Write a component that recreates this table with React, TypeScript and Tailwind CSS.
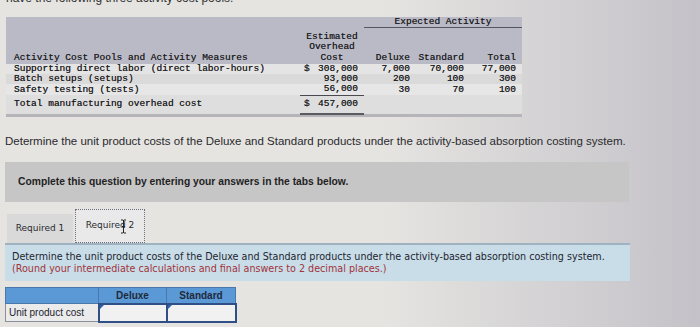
const mono = "font-['Liberation_Mono','Courier_New',monospace]";

const costRows = [
  { label: "Supporting direct labor (direct labor-hours)", cost: "$ 308,000", d: "7,000", s: "70,000", t: "77,000", bg: "bg-[#e4e4e4]" },
  { label: "Batch setups (setups)", cost: "93,000", d: "200", s: "100", t: "300", bg: "bg-[#dadadb]" },
  { label: "Safety testing (tests)", cost: "56,000", d: "30", s: "70", t: "100", bg: "bg-[#e6e6e6]" },
];

function ActivityTable() {
  return (
    <table
      className={`ml-[6px] mt-[11px] w-[516px] table-fixed border-collapse text-[9.5px] leading-[10px] text-[#1f1f24] [text-shadow:0_0_0.5px_#444] ${mono}`}
    >
      <colgroup>
        <col className="w-[294px]" />
        <col className="w-[64px]" />
        <col className="w-[48px]" />
        <col className="w-[56px]" />
        <col className="w-[54px]" />
      </colgroup>
      <tbody>
        <tr className="bg-[#b9bac6]">
          <td className="h-[10px]" />
          <td />
          <td colSpan={3} className="h-[10px] pt-[1px] text-center leading-[8px] border-b border-[#55565e]">
            Expected Activity
          </td>
        </tr>
        <tr className="bg-[#b9bac6]">
          <td className="pl-[8px] pb-[1px] align-bottom">Activity Cost Pools and Activity Measures</td>
          <td className="pt-[5px] pb-[1px] text-center leading-[10.3px] align-bottom">
            Estimated
            <br />
            Overhead
            <br />
            Cost
          </td>
          <td className="pb-[1px] pr-[2px] text-right align-bottom">Deluxe</td>
          <td className="pb-[1px] pr-[4px] text-right align-bottom">Standard</td>
          <td className="pb-[1px] pr-[6px] text-right align-bottom">Total</td>
        </tr>
        {costRows.map((r, i) => (
          <tr key={r.label} className={r.bg}>
            <td className="pl-[8px] h-[10px]">{r.label}</td>
            <td className={`pr-[6px] text-right ${i === 2 ? "border-b border-[#4a4a50] pb-[1px]" : ""}`}>
              {i === 0 ? (
                <span className="flex justify-between pl-[4px]">
                  <span>$</span>
                  <span>308,000</span>
                </span>
              ) : (
                r.cost
              )}
            </td>
            <td className="pr-[2px] text-right">{r.d}</td>
            <td className="pr-[4px] text-right">{r.s}</td>
            <td className="pr-[6px] text-right">{r.t}</td>
          </tr>
        ))}
        <tr className="bg-[#dedede]">
          <td className="pl-[8px] pt-[3px] pb-[4px]">Total manufacturing overhead cost</td>
          <td className="pt-[3px] pb-[4px] pl-[4px] pr-[6px] border-b-2 border-[#5a5a60]">
            <span className="flex justify-between">
              <span>$</span>
              <span>457,000</span>
            </span>
          </td>
          <td />
          <td />
          <td />
        </tr>
        <tr className="bg-[#b4b4b9]">
          <td colSpan={5} className="h-[3px]" />
        </tr>
      </tbody>
    </table>
  );
}

function IBeam() {
  return (
    <svg className="absolute left-[44px] top-[9px]" width="7" height="15" viewBox="0 0 7 15">
      <path d="M1 1h2M4 1h2M3.5 1v13M1 14h2M4 14h2M2 7.5h3" stroke="#222" strokeWidth="1" fill="none" />
    </svg>
  );
}

function AnswerTable() {
  return (
    <table className="ml-[5px] mt-[6px] w-[230px] table-fixed border-collapse font-['Liberation_Sans',Arial,sans-serif] text-[10px] text-[#1d2430]">
      <colgroup>
        <col className="w-[93px]" />
        <col className="w-[68px]" />
        <col className="w-[69px]" />
      </colgroup>
      <tbody>
        <tr className="bg-[#5b98d6]">
          <td className="h-[16px] border border-[#4a78ad]" />
          <td className="border border-[#4a78ad] text-center font-bold text-[#1f2a3a]">Deluxe</td>
          <td className="border border-[#4a78ad] text-center font-bold text-[#1f2a3a]">Standard</td>
        </tr>
        <tr className="bg-[#ebebeb]">
          <td className="h-[18px] border border-[#8a8f99] pl-[3px]">Unit product cost</td>
          <td className="border-2 border-[#2f4f86] bg-[#f1f1f1] p-0 align-top">
            <div className="h-0 w-0 border-l-[4px] border-b-[4px] border-l-[#2f5fa8] border-b-transparent" />
          </td>
          <td className="border-2 border-[#2f4f86] bg-[#f1f1f1] p-0 align-top">
            <div className="h-0 w-0 border-l-[4px] border-b-[4px] border-l-[#2f5fa8] border-b-transparent" />
          </td>
        </tr>
      </tbody>
    </table>
  );
}

export default function App() {
  return (
    <div className="h-[327px] w-[700px] overflow-hidden bg-linear-to-r from-[#e5e4e1] from-55% to-[#c4c2c8]">
      <div className="h-[6px] overflow-hidden">
        <p className="-mt-[9px] pl-[6px] font-['Liberation_Sans',Arial,sans-serif] text-[12px] leading-[14px] text-[#333]">
          have the following three activity cost pools:
        </p>
      </div>
      <ActivityTable />

      <p className="mt-[17px] pl-[5px] font-['Liberation_Sans',Arial,sans-serif] text-[11.5px] leading-[14px] text-[#2a2a2e]">
        Determine the unit product costs of the Deluxe and Standard products under the activity-based absorption costing system.
      </p>

      <div className="ml-[5px] mt-[14px] flex h-[40px] w-[624px] items-center bg-[#c7c6c6] pl-[13px]">
        <span className="font-['Liberation_Sans',Arial,sans-serif] text-[10.3px] font-bold text-[#1f1f24]">
          Complete this question by entering your answers in the tabs below.
        </span>
      </div>

      <div className="ml-[7px] mt-[7px] flex items-end font-['DejaVu_Sans',Verdana,sans-serif] text-[9px] text-[#2a2a30]">
        <div className="flex h-[29px] w-[66px] items-center justify-center bg-[#d9d9d9]">Required 1</div>
        <div className="relative ml-[2px] flex h-[34px] w-[70px] items-center justify-center border border-dotted border-[#6b7080] bg-[#e9e9e9]">
          Required 2
          <IBeam />
        </div>
      </div>

      <div className="ml-[5px] w-[625px] border-t-2 border-[#9fb2c0] bg-[#c8dde8] pl-[7px] pt-[6px] pb-[5px] font-['DejaVu_Sans',Verdana,sans-serif] text-[9.6px] leading-[12.5px]">
        <p className="text-[#1f2530]">
          Determine the unit product costs of the Deluxe and Standard products under the activity-based absorption costing system.
        </p>
        <p className="text-[#a2333a]">(Round your intermediate calculations and final answers to 2 decimal places.)</p>
      </div>

      <AnswerTable />
    </div>
  );
}
